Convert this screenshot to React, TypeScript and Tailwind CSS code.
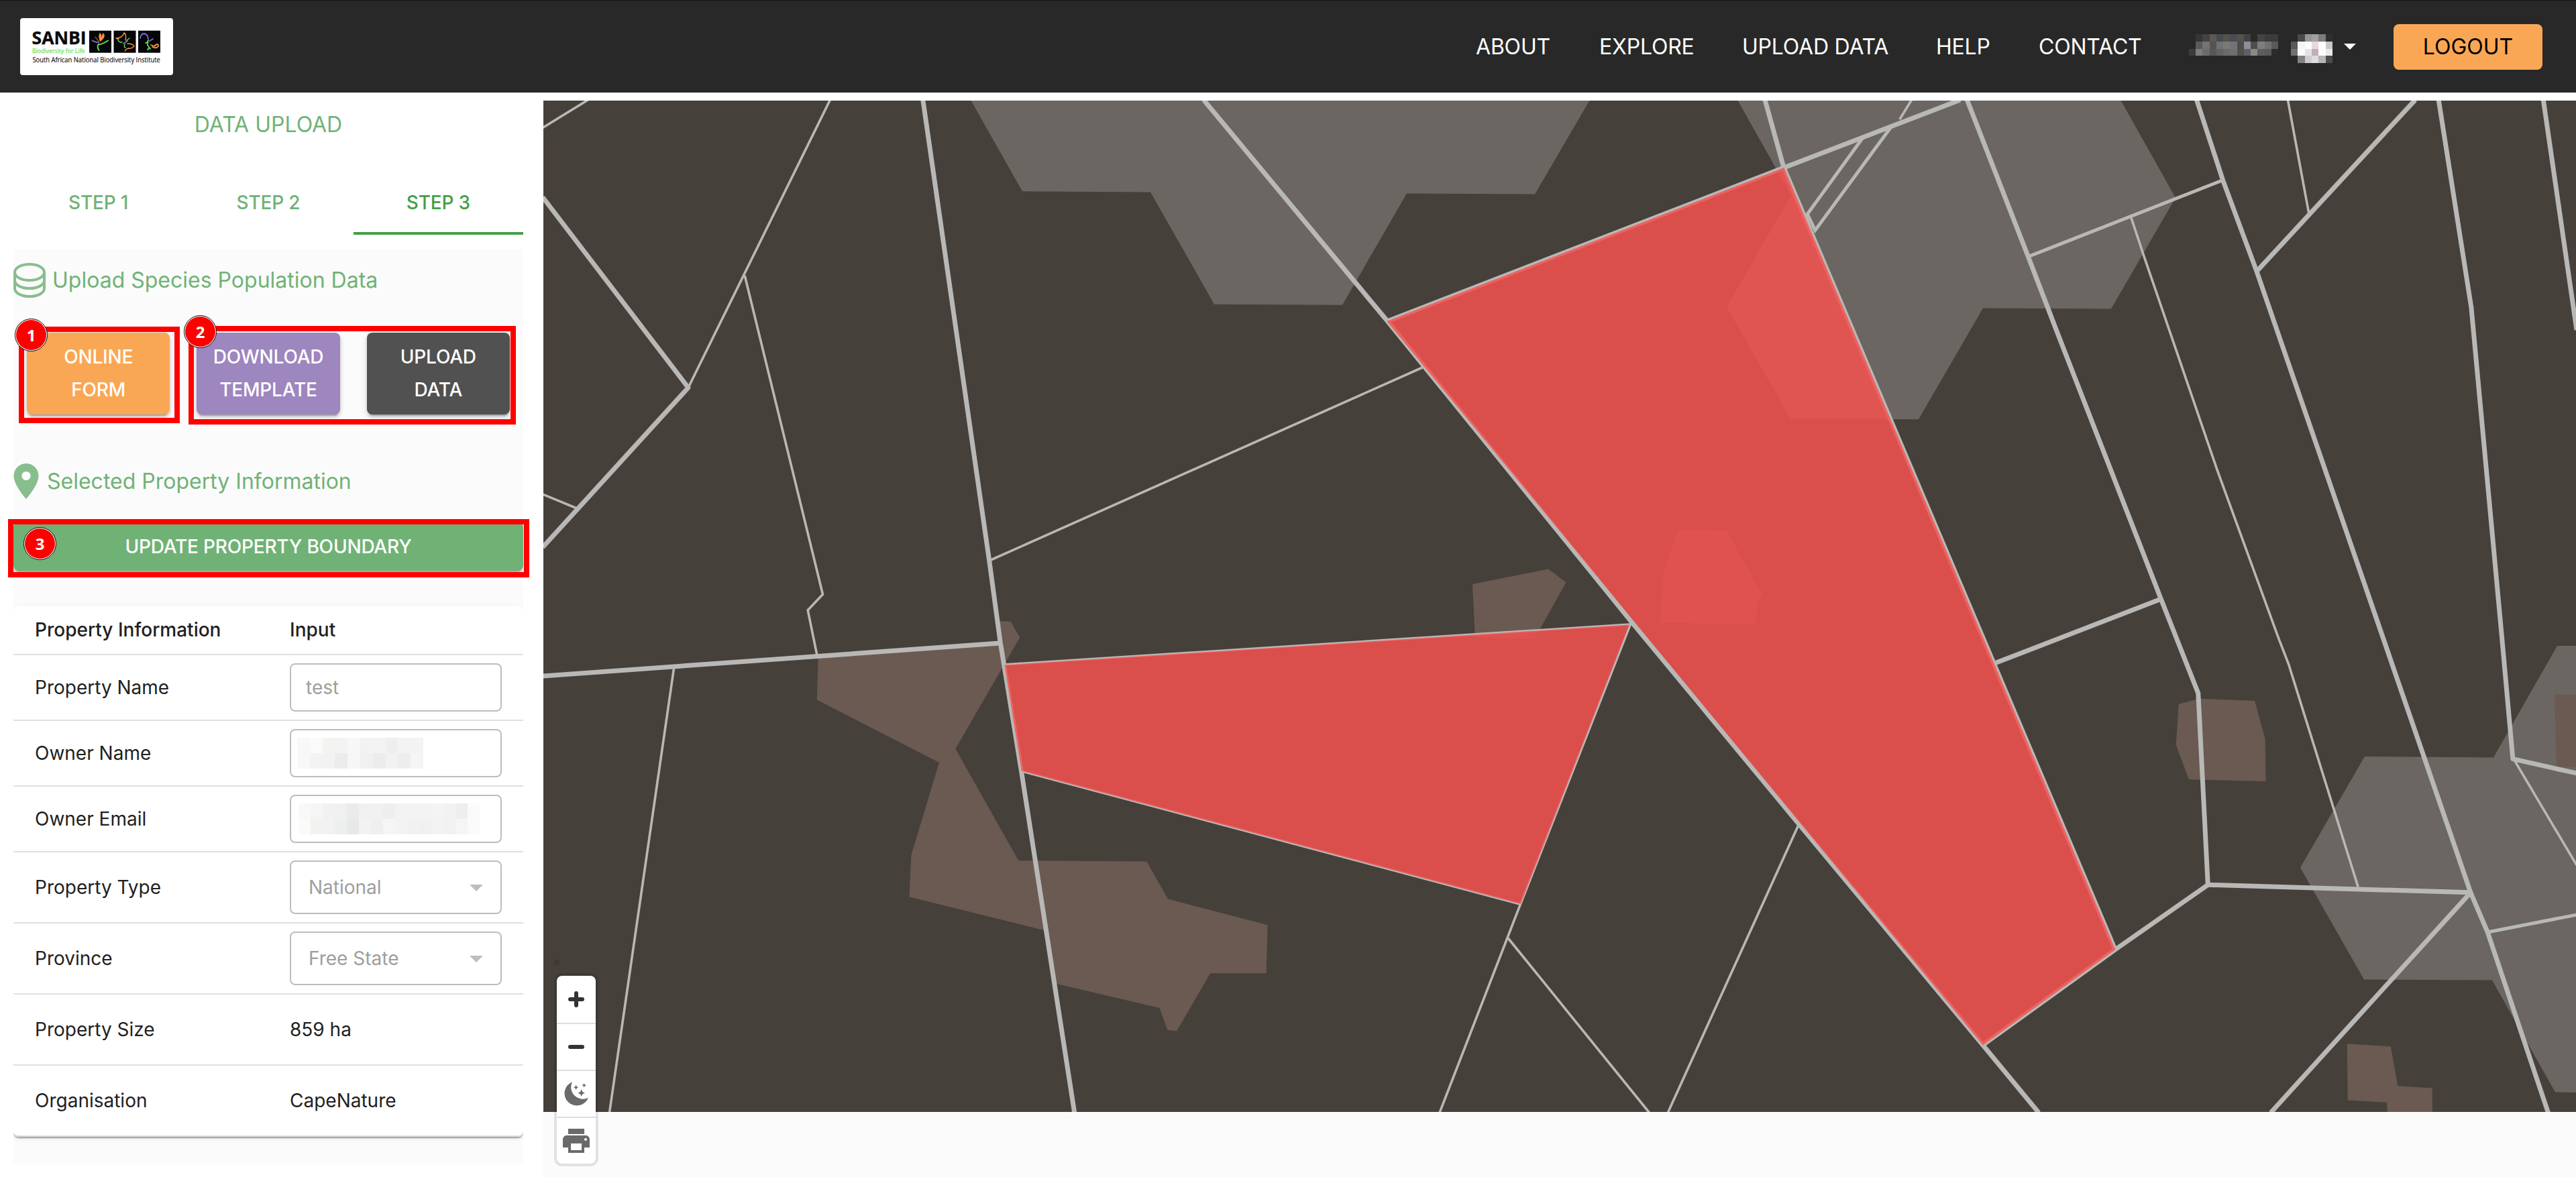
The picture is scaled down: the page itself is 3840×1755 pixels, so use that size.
import React from "react";

const GREY = "#b8b8b6";

function Logo() {
  return (
    <svg viewBox="0 0 228 85" className="h-[85px] w-[228px]" fontFamily="'Open Sans', 'Noto Sans', sans-serif">
      <rect width="228" height="85" rx="4" fill="#fff" />
      <text x="17.6" y="38.6" fontSize="26.6" fontWeight="700" fill="#0a0a0a" stroke="#0a0a0a" strokeWidth="0.4" textLength="81" lengthAdjust="spacingAndGlyphs">SANBI</text>
      <text x="18" y="51.6" fontSize="9.6" fill="#6fe05c" stroke="#6fe05c" strokeWidth="0.25" textLength="78.5" lengthAdjust="spacingAndGlyphs">Biodiversity for Life</text>
      <text x="18.4" y="66" fontSize="10" fill="#111" stroke="#111" strokeWidth="0.15" textLength="190.5" lengthAdjust="spacingAndGlyphs">South African National Biodiversity Institute</text>
      <rect x="103" y="18.7" width="33" height="33" fill="#050607" />
      <rect x="139.5" y="18.7" width="33" height="33" fill="#050607" />
      <rect x="176" y="18.7" width="33" height="33" fill="#050607" />
      <g strokeLinecap="round" fill="none" strokeWidth="1.4">
        <path d="M119 21.5 Q115.5 28 119.5 35 Q124 28 119 21.5Z" fill="#f5933b" stroke="none" />
        <path d="M123.5 23 Q122 29 119.5 34.5 Q125 31 125.5 26Z M112 28 L117.5 35" fill="#f5933b" stroke="#f5933b" strokeWidth="1" />
        <path d="M107.5 33.5 Q112 36.5 117 36" stroke="#8468e0" strokeWidth="1.8" />
        <path d="M131 33.5 Q121 40 116.5 39 M117 39 Q114 43 117.5 48" stroke="#5fe04a" strokeWidth="2" />
        <path d="M143 30 Q152 30 155 22 Q159 24 157 33 M143 30 Q143 31 147 31" stroke="#f5933b" />
        <path d="M160 38 Q168 38 170 42 Q166 46 162 45 Q157 46 156.5 49" stroke="#f5933b" />
        <path d="M154 38 L160 34" stroke="#8468e0" strokeWidth="2" />
        <path d="M146 32 Q146 36 152 36 M156 39 Q154 44 157 44 M159 33 L163 30" stroke="#5fe04a" />
        <path d="M179 30 Q180 23 185 23 Q190 24 191 31 M193 34 L198 31" stroke="#8468e0" strokeWidth="1.8" />
        <path d="M191 33 Q188 37 191 42 L194 46 M187 37 L191 36 M190 47 L193 44" stroke="#5fe04a" strokeWidth="1.8" />
        <path d="M195 40 L200 42 Q206 36 206 42 Q203 46 197 43" stroke="#f5933b" strokeWidth="1.8" />
      </g>
    </svg>
  );
}

const nameCells = [
  ["", "#343537", "#434346", "#5a5859", "#484a4f", "#55524e", "#494c50", "#54524e", "#424242", "", "#434446", "#3b3b3b", "#3c3c3c"],
  ["", "#555b5f", "#777270", "#54534f", "#6f7173", "#787a78", "#747476", "#4e4c49", "#8c8f98", "#4c4d4f", "#827c78", "#6e7275", "#5e5854"],
  ["#383b42", "#7c7c7a", "#6b6b6b", "#585856", "#626264", "#696a6c", "#6e6f70", "#52504c", "#5e6165", "#8a8986", "#5e5e5e", "#575b5d", "#2e2a29"],
  ["", "", "", "", "", "", "", "", "", "", "", "", ""],
];
const avatarCells = [
  ["", "#4a4a4a", "#969596", "#a2a0a2", "#7d7d7d", "#2f2f2f"],
  ["#5a5a5a", "#f7f4f7", "#fdfbff", "#e8dadb", "#fdfcff", "#c9c9c9"],
  ["#727272", "#fdfbff", "#e8e2e7", "#bfafb6", "#fdfbff", "#e9e9ea"],
  ["", "#838383", "#cfcdcf", "#dddcde", "#b6b6b6", "#4c4c4e"],
];
const ownerCells = [
  ["#f8f8f8", "#fafafa", "#f3f3f2", "#f3f3f3", "#f7f7f6", "#f1f3f2", "#f3f3f3", "#eeeeef", "#f3f3f3", "#f3f3f3"],
  ["#f8f8f8", "#f3f3f3", "#f2f2f2", "#ebebec", "#f6f6f6", "#f0f0f0", "#ececec", "#f2f2f2", "#ededed", "#f4f6f5"],
];
const emailCells = [
  ["#f8f8f8", "#f5f5f3", "#f1f1f1", "#eff0f0", "#ebebea", "#f0f0f0", "#f2f1ef", "#eeeeef", "#f3f3f3", "#f3f3f3", "#f2f3f2", "#f4f4f4", "#f2f2f2", "#eeeeef", "#fafafa"],
  ["#fafafa", "#f2f2f0", "#f2f2f2", "#edefef", "#e8e8e8", "#f2f2f2", "#efefef", "#f4f6f6", "#f3f3f3", "#f1f1ef", "#eff1f0", "#f3f3f3", "#f1f1f1", "#f5f5f5", "#fafafa"],
];

function Mosaic({ cells, className }: { cells: string[][]; className: string }) {
  return (
    <div className={`flex flex-col ${className}`}>
      {cells.map((row, r) => (
        <div key={r} className="flex flex-1">
          {row.map((c, i) => (
            <div key={i} className="flex-1" style={{ backgroundColor: c || "transparent" }} />
          ))}
        </div>
      ))}
    </div>
  );
}

function Header() {
  return (
    <header className="flex h-[138px] w-full items-center justify-between border-t border-[#111] bg-[#282828] pl-[30px] pr-[50px] text-[32px] text-white">
      <Logo />
      <div className="flex items-center">
        <nav className="flex items-center gap-[72px] whitespace-nowrap tracking-[-0.2px]">
          <a className="w-[112px]">ABOUT</a>
          <a className="w-[141px]">EXPLORE</a>
          <a className="w-[217px]">UPLOAD DATA</a>
          <a className="w-[81px]">HELP</a>
          <a className="w-[154px]">CONTACT</a>
        </nav>
        <div className="ml-[70px] flex items-center">
          <Mosaic cells={nameCells} className="mt-[6px] h-[43px] w-[133px]" />
          <Mosaic cells={avatarCells} className="ml-[19px] mt-[6px] h-[43px] w-[62px]" />
          <svg viewBox="0 0 18 9" className="ml-[17px] h-[9px] w-[18px]"><path d="M0 0H18L9 9Z" fill="#fff" /></svg>
        </div>
        <button className="ml-[56px] h-[68px] w-[222px] rounded-lg bg-[#faa755] text-black">LOGOUT</button>
      </div>
    </header>
  );
}

function Badge({ n, className }: { n: number; className: string }) {
  return (
    <div className={`absolute flex size-[49px] items-center justify-center rounded-full border border-black bg-white p-px ${className}`}>
      <div className="flex size-full items-center justify-center rounded-full bg-[#ff0000] font-['Open_Sans',sans-serif] text-[24px] font-bold text-white">{n}</div>
    </div>
  );
}

function DatabaseIcon() {
  return (
    <svg viewBox="0 0 48 52" className="h-[52px] w-[48px] shrink-0" fill="none" stroke="#88be8e" strokeWidth="4">
      <ellipse cx="24" cy="14" rx="22" ry="12" />
      <path d="M2 14V38C2 45 12 50 24 50S46 45 46 38V14M2 26C2 33 12 38 24 38S46 33 46 26" />
    </svg>
  );
}

function PinIcon() {
  return (
    <svg viewBox="5 2 14 20" className="h-[53px] w-[38px] shrink-0">
      <path fill="#88be8e" d="M12 2C8.13 2 5 5.13 5 9c0 5.25 7 13 7 13s7-7.75 7-13c0-3.87-3.13-7-7-7zm0 9.5a2.5 2.5 0 0 1 0-5 2.5 2.5 0 0 1 0 5z" />
    </svg>
  );
}

const SHADOW = "shadow-[0_6px_2px_-4px_rgba(0,0,0,0.2),0_4px_4px_rgba(0,0,0,0.14),0_2px_10px_rgba(0,0,0,0.12)]";

function Row({ label, h, children }: { label: string; h: string; children: React.ReactNode }) {
  return (
    <div className={`flex items-center border-b-2 border-[#e0e0e0] pl-8 ${h}`}>
      <div className="w-[380px]">{label}</div>
      {children}
    </div>
  );
}

function Select({ value }: { value: string }) {
  return (
    <div className="flex h-20 w-[316px] items-center justify-between rounded-lg border-2 border-[#bdbdbd] pl-[26px] pr-[26px] text-[#9e9e9e]">
      {value}
      <svg viewBox="0 0 20 10" className="mt-[2px] h-[10px] w-[20px]"><path d="M0 0H20L10 10Z" fill="#bdbdbd" /></svg>
    </div>
  );
}

function Sidebar() {
  return (
    <aside className="relative h-[1617px] w-[810px] shrink-0 bg-white px-5 pr-[30px] text-[28px] text-[#212121]">
      <h1 className="flex h-24 items-center justify-center text-[32px] text-[#70b276]">DATA UPLOAD</h1>
      <div className="mt-5 flex h-24 tracking-[-0.2px] text-[#70b276]">
        <div className="flex flex-1 items-center justify-center font-medium">STEP 1</div>
        <div className="flex flex-1 items-center justify-center font-medium">STEP 2</div>
        <div className="flex flex-1 items-center justify-center border-b-4 border-[#43a047] pt-1 font-medium text-[#43a047]">STEP 3</div>
      </div>
      <div className="mt-[22px] h-[1363px] bg-[#fbfbfb] pt-5">
        <div className="flex h-[52px] items-center gap-[10px] text-[32px] text-[#70b276]">
          <DatabaseIcon />
          Upload Species Population Data
        </div>
        <div className="mt-[52px] grid grid-cols-3 text-center font-medium leading-[49px] tracking-[-0.2px] text-white">
          <div className={`mx-5 rounded-lg bg-[#faa755] py-3 ${SHADOW}`}>ONLINE<br />FORM</div>
          <div className={`mx-5 rounded-lg bg-[#9e86be] py-3 ${SHADOW}`}>DOWNLOAD<br />TEMPLATE</div>
          <div className={`mx-5 rounded-lg bg-[#515151] py-3 ${SHADOW}`}>UPLOAD<br />DATA</div>
        </div>
        <div className="mt-[73px] flex h-[53px] items-center gap-[12px] text-[32px] text-[#70b276]">
          <PinIcon />
          Selected Property Information
        </div>
        <div className={`mt-[34px] flex h-[73px] items-center justify-center rounded-lg bg-[#70b276] font-medium tracking-[-0.2px] text-white ${SHADOW}`}>UPDATE PROPERTY BOUNDARY</div>
        <div className="mt-[52px] rounded-lg bg-white shadow-[0_4px_2px_-2px_rgba(0,0,0,0.2),0_2px_2px_rgba(0,0,0,0.14),0_2px_6px_rgba(0,0,0,0.12)] [clip-path:inset(-6px_0_-12px_0)]">
          <div className="flex h-[74px] items-center border-b-2 border-[#e0e0e0] pl-8 font-medium">
            <div className="w-[380px]">Property Information</div>
            <div>Input</div>
          </div>
          <Row label="Property Name" h="h-[98px]">
            <div className="flex h-[72px] w-[316px] items-center rounded-lg border-2 border-[#bdbdbd] pl-[22px] text-[#9e9e9e]">test</div>
          </Row>
          <Row label="Owner Name" h="h-[98px]">
            <div className="flex h-[72px] w-[316px] items-center rounded-lg border-2 border-[#bdbdbd] pl-[9px]">
              <Mosaic cells={ownerCells} className="h-[46px] w-[188px]" />
            </div>
          </Row>
          <Row label="Owner Email" h="h-[98px]">
            <div className="flex h-[72px] w-[316px] items-center rounded-lg border-2 border-[#bdbdbd] pl-[11px]">
              <Mosaic cells={emailCells} className="h-[46px] w-[270px]" />
            </div>
          </Row>
          <Row label="Property Type" h="h-[106px]"><Select value="National" /></Row>
          <Row label="Province" h="h-[106px]"><Select value="Free State" /></Row>
          <Row label="Property Size" h="h-[106px]">859 ha</Row>
          <Row label="Organisation" h="h-[106px] rounded-b-lg">CapeNature</Row>
        </div>
      </div>

      <div className="absolute left-[28px] top-[349px] h-[144px] w-[240px] border-8 border-[#ff0000]" />
      <div className="absolute left-[281px] top-[348px] h-[147px] w-[488px] border-8 border-[#ff0000]" />
      <div className="absolute left-[12px] top-[636px] h-[87px] w-[777px] border-8 border-[#ff0000]" />
      <Badge n={1} className="left-[22px] top-[337px]" />
      <Badge n={2} className="left-[274px] top-[332px]" />
      <Badge n={3} className="left-[35px] top-[648px]" />
    </aside>
  );
}

const thick = [
  "M809 294L1026 578L809 816",
  "M1375.8 149L1474.7 836L1491.2 958L1522.5 1149.7L1601.7 1659",
  "M1794.3 149L2068 478.5L2431.5 926.5L2681.6 1228.8L2956 1558.5L3039 1659",
  "M809 1008L1490 959",
  "M2922 149L2659.3 250L2068 479",
  "M2631 149L2659 250L3153 1416",
  "M2932.3 149L3023.8 383.7L3064.5 490L3220.5 891L3276.8 1033.6L3291.3 1319.3L3153 1416L2956 1558",
  "M3274.5 149L3313.6 268.6L3364 404.6L3552 950L3682.9 1330.8L3708.1 1389.6L3798.5 1659",
  "M3600.3 149L3364 404.6",
  "M3635.2 149L3683.9 458.5L3729.5 950L3745.9 1131.7L3841 1153",
  "M3791.3 149L3841 492",
  "M3220.5 893.6L2975.3 988.3",
  "M3291.3 1319.3L3682.9 1330.8L3385 1659",
];
const thin = [
  "M809 190.5L876.5 149",
  "M1237.4 149L1026 578",
  "M1110.2 411L1226.5 886.3L1204.2 909.8L1217.8 976.3",
  "M809 737L860 758",
  "M1474.7 836L2120.3 548",
  "M1004.5 997L908.5 1659",
  "M1497.5 991L2430 931",
  "M1522.5 1149.7L2266.7 1348.3",
  "M2431.5 926.5L2430 932L2266.7 1347.7L2146 1659",
  "M2248.2 1399L2458.5 1659",
  "M2681.6 1228.8L2486.3 1659",
  "M2849.6 149L2831.8 178",
  "M3176.9 324.6L3195.3 380L3305.8 702.7L3396 950L3411.5 990L3515.2 1322.6",
  "M3410.4 149L3441.6 317",
  "M3747 1131.7L3841 1290",
];
const hexes = [
  "1447,149 1524,285.3 1715,286.4 1810,453.7 2001,454.8 2097,288.5 2288,289.5 2370,149",
  "2590,149 2669.9,291 2574,458 2669,624.2 2860,625.3 2956,459.5 3147,460.5 3243,294.7 3161,149",
  "3841,963 3812,963 3717,1129.6 3525,1128 3429,1293.7 3524,1460.5 3715,1461.6 3809,1628.5 3841,1629",
];
const browns = [
  "1219.7,977 1217.8,1043.4 1400,1137 1358.4,1275 1355.4,1337.3 1556,1387 1569,1464 1575.5,1467 1728.6,1503 1740.3,1535.8 1754,1537.4 1804.3,1451.3 1887.6,1451.3 1889.6,1379.3 1741,1340.6 1709.3,1284.4 1518.3,1283.3 1424.3,1116.5 1520.2,950.7 1506.7,926.7 1488,926 1491,959",
  "2195,871 2308.3,848.6 2334.5,868.5 2287,953.4 2198.8,950.2",
  "2501.3,790 2573,790.6 2628.3,888.4 2619.5,893.6 2617.6,931.3 2475,928.6 2479,857",
  "3247.7,1050 3278.7,1041.8 3361,1045 3376.6,1101.7 3377.6,1165 3263,1162.3 3243.8,1111",
  "3498.7,1556.5 3563.7,1560.3 3574.4,1619.2 3625.7,1622.5 3625.7,1659 3558.8,1659 3558,1643.7 3499.7,1640.5",
  "3808,1035.8 3841,1036.3 3841,1143.7 3811,1143.2",
];

function ParcelMap() {
  return (
    <svg viewBox="810 150 3030 1508" className="block h-[1508px] w-[3030px] bg-[#46403b]">
      {hexes.map((p) => <polygon key={p} points={p} fill="#6b6661" />)}
      {browns.map((p) => <polygon key={p} points={p} fill="#6a5a52" />)}
      <g fill="none" stroke={GREY} strokeWidth="3.6">{thin.map((d) => <path key={d} d={d} />)}</g>
      <g fill="none" stroke={GREY} strokeWidth="5">
        <path d="M3023.8 382.5L3313.6 268.6M3708 1390L3841 1364M2776.6 205.8L2694.2 319.3L2705.8 343.4L2819.2 189" />
      </g>
      <g fill="none" stroke={GREY} strokeWidth="7" strokeLinejoin="round">{thick.map((d) => <path key={d} d={d} />)}</g>
      <g fill="#f7514f" fillOpacity="0.84">
        <polygon points="2067.5,479 2659.3,250 3153.3,1416 2956,1558.5" />
        <polygon points="1497.5,991.5 2429,931.5 2266.7,1348 1523,1149.7" />
      </g>
    </svg>
  );
}

function MapControls() {
  return (
    <div className="absolute left-[20px] top-[1305px] w-[58px] rounded-lg bg-white shadow-[0_0_0_4px_rgba(0,0,0,0.1)]">
      <div className="flex h-[70px] items-center justify-center">
        <svg viewBox="0 0 24 24" className="size-6"><path d="M12 3V21M3 12H21" stroke="#333" strokeWidth="6" strokeLinecap="round" /></svg>
      </div>
      <div className="flex h-[70px] items-center justify-center border-t-2 border-[#ddd]">
        <svg viewBox="0 0 24 24" className="size-6"><path d="M3 12H21" stroke="#333" strokeWidth="6" strokeLinecap="round" /></svg>
      </div>
      <div className="flex h-[70px] items-center justify-center border-t-2 border-[#ddd]">
        <svg viewBox="0 0 108 108" className="size-[36px]" fill="#6a6a6a">
          <path d="M36 .6A55 55 0 1 0 108 71A53 53 0 0 1 36 .6Z" />
          <path d="M53 14L56.5 21.5L64 25L56.5 28.5L53 36L49.5 28.5L42 25L49.5 21.5ZM89 6L92 13L99 16L92 19L89 26L86 19L79 16L86 13ZM77 34L82 45L93 50L82 55L77 66L72 55L61 50L72 45Z" />
        </svg>
      </div>
      <div className="flex h-[70px] items-center justify-center border-t-2 border-[#ddd]">
        <svg viewBox="0 0 24 24" className="size-12 shrink-0" fill="#6a6a6a">
          <path d="M19 8H5c-1.66 0-3 1.34-3 3v6h4v4h12v-4h4v-6c0-1.66-1.34-3-3-3zm-3 11H8v-5h8v5zm3-7c-.55 0-1-.45-1-1s.45-1 1-1 1 .45 1 1-.45 1-1 1zm-1-9H6v4h12V3z" />
        </svg>
      </div>
    </div>
  );
}

export default function App() {
  return (
    <div className="h-[1755px] w-[3840px] overflow-hidden bg-white font-['Inter',sans-serif]">
      <Header />
      <div className="flex">
        <Sidebar />
        <main className="relative mt-3 h-[1605px] w-[3030px] bg-[#fbfbfb]">
          <ParcelMap />
          <div className="absolute left-[16px] top-[1281px] size-2 bg-black/10" />
          <MapControls />
        </main>
      </div>
    </div>
  );
}
